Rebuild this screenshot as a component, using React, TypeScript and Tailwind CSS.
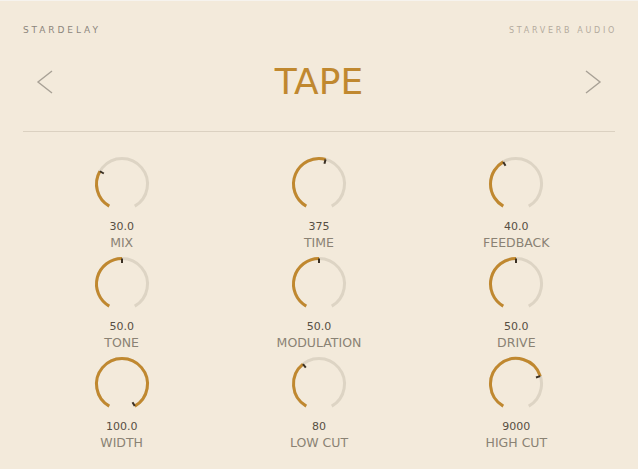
const knobs = [
  { value: "30.0", label: "MIX", frac: 0.3 },
  { value: "375", label: "TIME", frac: 0.55 },
  { value: "40.0", label: "FEEDBACK", frac: 0.4 },
  { value: "50.0", label: "TONE", frac: 0.5 },
  { value: "50.0", label: "MODULATION", frac: 0.5 },
  { value: "50.0", label: "DRIVE", frac: 0.5 },
  { value: "100.0", label: "WIDTH", frac: 1 },
  { value: "80", label: "LOW CUT", frac: 0.37 },
  { value: "9000", label: "HIGH CUT", frac: 0.74 },
]

const CX = 29
const CY = 29
const R = 25.5

function polar(deg: number, r: number) {
  const a = (deg * Math.PI) / 180
  return { x: CX + r * Math.sin(a), y: CY - r * Math.cos(a) }
}

function arc(from: number, to: number) {
  const s = polar(from, R)
  const e = polar(to, R)
  const large = to - from > 180 ? 1 : 0
  return `M ${s.x} ${s.y} A ${R} ${R} 0 ${large} 1 ${e.x} ${e.y}`
}

function Knob({ value, label, frac }: { value: string; label: string; frac: number }) {
  const angle = -150 + frac * 300
  const t1 = polar(angle, 21)
  const t2 = polar(angle, 25.5)
  return (
    <div className="flex flex-col items-center pb-[5px]">
      <svg width="58" height="58" viewBox="0 0 58 58">
        <path d={arc(-150, 150)} fill="none" stroke="#ddd4c4" strokeWidth="3" />
        {frac > 0 && <path d={arc(-150, angle)} fill="none" stroke="#c0882f" strokeWidth="3" />}
        <line x1={t1.x} y1={t1.y} x2={t2.x} y2={t2.y} stroke="#3a3024" strokeWidth="2" />
      </svg>
      <div className="mt-[7px] text-[11px] leading-[14px] text-[#574f43]">{value}</div>
      <div className="mt-[1px] text-[12.5px] leading-[15px] text-[#8a8274]">{label}</div>
    </div>
  )
}

function Chevron({ dir }: { dir: "left" | "right" }) {
  return (
    <svg width="18" height="24" viewBox="0 0 18 24">
      <path
        d={dir === "left" ? "M 16 1 L 2 12 L 16 23" : "M 2 1 L 16 12 L 2 23"}
        fill="none"
        stroke="#a8a196"
        strokeWidth="1.4"
      />
    </svg>
  )
}

export default function App() {
  return (
    <div
      className="w-[638px] h-[469px] overflow-hidden bg-[#f3eadb] border-t border-[#f6f3ee] px-[23px]"
      style={{ fontFamily: '"DejaVu Sans", Verdana, sans-serif' }}
    >
      <div className="flex items-center justify-between pt-[22px] h-[37px]">
        <span className="text-[9px] tracking-[2.9px] text-[#8b857b]">STARDELAY</span>
        <span className="text-[8px] tracking-[2.7px] text-[#b3ab9e] -mr-[2px]">STARVERB AUDIO</span>
      </div>
      <div className="flex items-center justify-between h-[87px] px-[13px]">
        <Chevron dir="left" />
        <span className="text-[36px] leading-none text-[#c0882f]">TAPE</span>
        <Chevron dir="right" />
      </div>
      <div className="h-px w-[592px] bg-[#dbd1c1] mt-[6px]" />
      <div className="grid grid-cols-3 w-[592px] mt-[23px]">
        {knobs.map((k) => (
          <Knob key={k.label} {...k} />
        ))}
      </div>
    </div>
  )
}
